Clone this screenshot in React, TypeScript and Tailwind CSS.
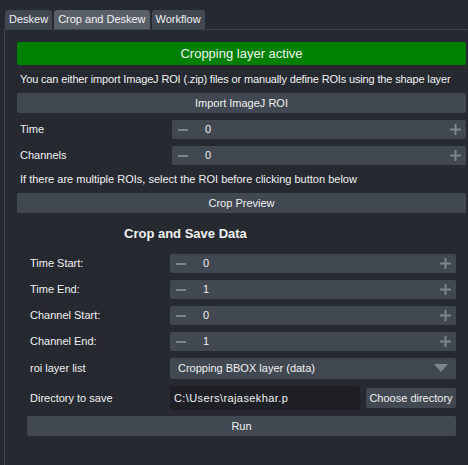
import { useState } from "react";

const tabs = ["Deskew", "Crop and Deskew", "Workflow"];

function Minus() {
  return (
    <svg width="10" height="10" viewBox="0 0 10 10" className="shrink-0">
      <rect x="0" y="4" width="10" height="2" fill="#7e848c" />
    </svg>
  );
}

function Plus() {
  return (
    <svg width="11" height="11" viewBox="0 0 11 11" className="shrink-0">
      <rect x="0" y="4.5" width="11" height="2" fill="#7e848c" />
      <rect x="4.5" y="0" width="2" height="11" fill="#7e848c" />
    </svg>
  );
}

function SpinBox({ value }: { value: string }) {
  return (
    <div className="flex-1 h-[19px] bg-[#414851] rounded-[2px] flex items-center pl-[6px] pr-[5px]">
      <Minus />
      <span className="ml-[17px] flex-1">{value}</span>
      <Plus />
    </div>
  );
}

function Button({ label, className = "" }: { label: string; className?: string }) {
  return (
    <div
      className={
        "h-[20px] bg-[#414851] rounded-[2px] flex items-center justify-center " + className
      }
    >
      {label}
    </div>
  );
}

export default function App() {
  const [active] = useState(1);
  const spinRows: [string, string][] = [
    ["Time Start:", "0"],
    ["Time End:", "1"],
    ["Channel Start:", "0"],
    ["Channel End:", "1"],
  ];
  return (
    <div className="w-[468px] h-[465px] bg-[#262930] text-[#f0f1f2] text-[11px] font-['Liberation_Sans',Arial,sans-serif] flex flex-col overflow-hidden">
      {/* tabs */}
      <div className="flex pt-[10px] pl-[5px] gap-[2px]">
        {tabs.map((t, i) => (
          <div
            key={t}
            className={
              "h-[19px] px-[4px] flex items-center rounded-t-[3px] text-[11px] " +
              (i === active ? "bg-[#5a6069]" : "bg-[#414851]")
            }
          >
            {t}
          </div>
        ))}
      </div>

      {/* pane */}
      <div className="flex-1 ml-[4px] mr-[1px] border-l border-t border-[#3d424b] pl-[12px] pr-[1px] pt-[12px] flex flex-col">
        <div className="h-[23px] bg-[#008000] rounded-[2px] flex items-center justify-center text-[13px]">
          Cropping layer active
        </div>
        <div className="h-[28px] flex items-center pl-[3px] whitespace-nowrap tracking-[-0.15px]">
          You can either import ImageJ ROI (.zip) files or manually define ROIs using the shape layer
        </div>
        <Button label="Import ImageJ ROI" />
        <div className="flex items-center mt-[7px]">
          <span className="w-[155px] pl-[3px]">Time</span>
          <SpinBox value="0" />
        </div>
        <div className="flex items-center mt-[7px]">
          <span className="w-[155px] pl-[3px]">Channels</span>
          <SpinBox value="0" />
        </div>
        <div className="h-[28px] flex items-center pl-[3px] whitespace-nowrap">
          If there are multiple ROIs, select the ROI before clicking button below
        </div>
        <Button label="Crop Preview" />

        {/* crop and save */}
        <div className="pl-[10px] pr-[10px] flex flex-col">
          <div className="h-[41px] flex items-center pl-[97px] font-bold text-[13px]">
            Crop and Save Data
          </div>
          {spinRows.map(([l, v], i) => (
            <div key={l} className={"flex items-center " + (i > 0 ? "mt-[7px]" : "")}>
              <span className="w-[143px] pl-[3px]">{l}</span>
              <SpinBox value={v} />
            </div>
          ))}
          <div className="flex items-center mt-[7px]">
            <span className="w-[143px] pl-[3px]">roi layer list</span>
            <div className="flex-1 h-[21px] bg-[#414851] rounded-[2px] flex items-center pl-[8px] pr-[8px]">
              <span className="flex-1">Cropping BBOX layer (data)</span>
              <svg width="14" height="9" viewBox="0 0 14 9">
                <polygon points="0,0 14,0 7,8" fill="#7e848c" />
              </svg>
            </div>
          </div>
          <div className="flex items-center mt-[7px]">
            <span className="w-[143px] pl-[3px]">Directory to save</span>
            <div className="w-[190px] h-[24px] bg-[#1e2025] rounded-[2px] flex items-center pl-[4px] tracking-[0.4px]">
              C:\Users\rajasekhar.p
            </div>
            <div className="ml-[6px] flex-1 h-[20px] bg-[#414851] rounded-[2px] flex items-center justify-center">
              Choose directory
            </div>
          </div>
          <Button label="Run" className="mt-[6px]" />
        </div>
      </div>
    </div>
  );
}
